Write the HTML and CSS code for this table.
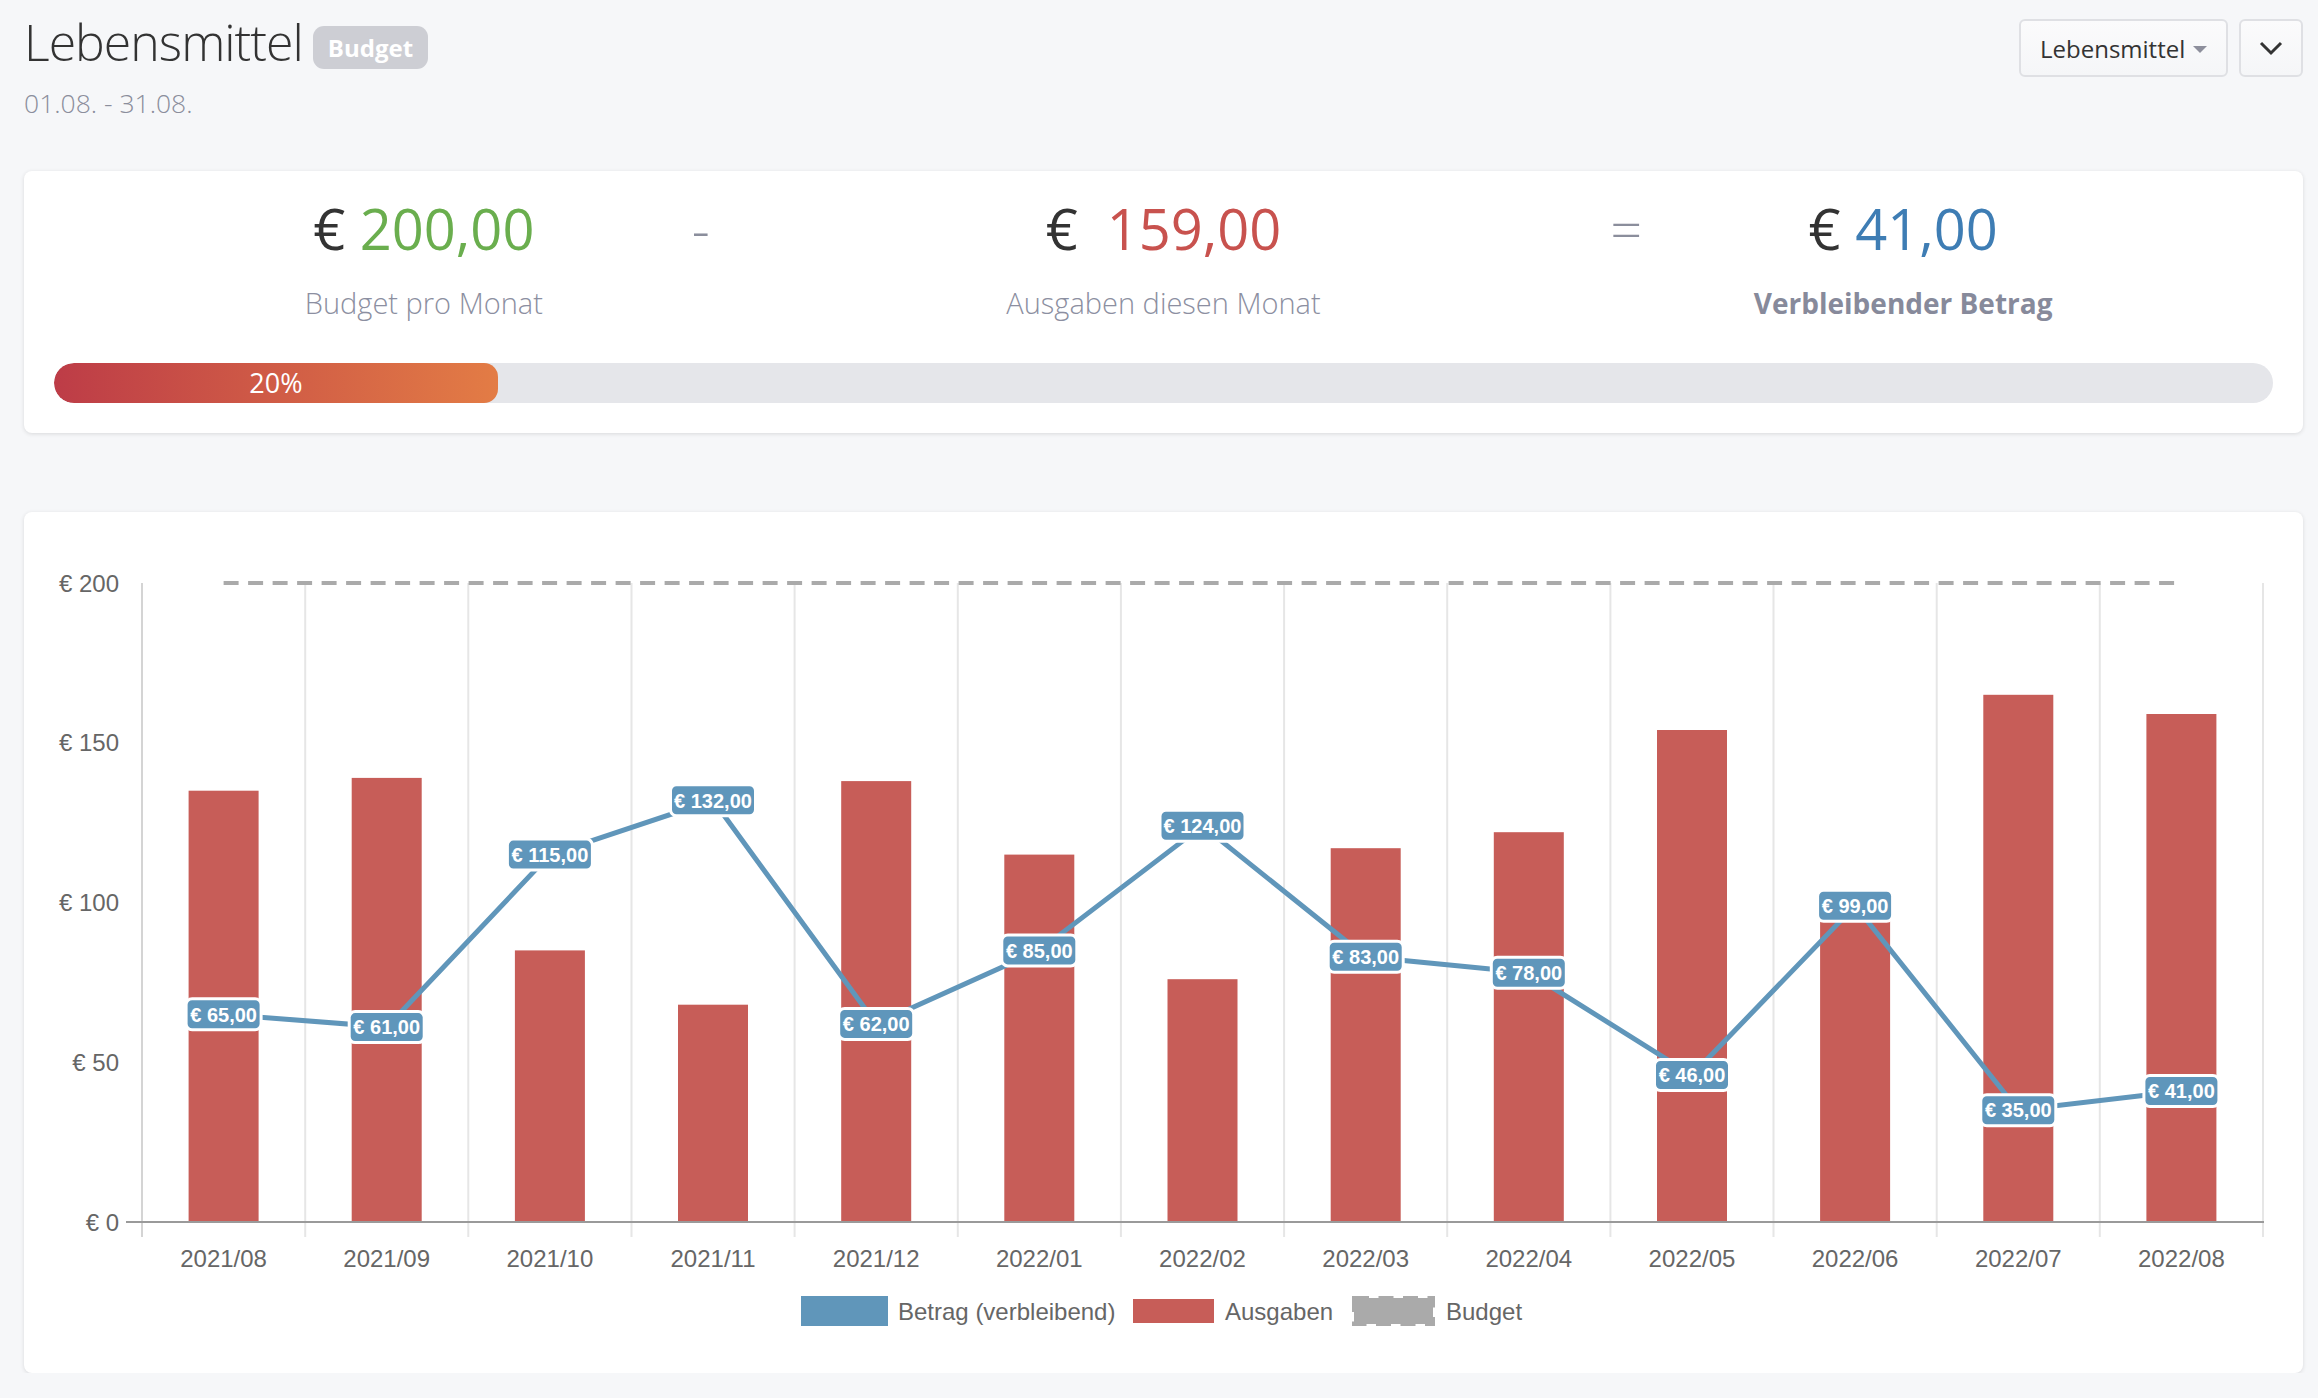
FILE: index.html
```html
<!DOCTYPE html>
<html lang="de">
<head>
<meta charset="utf-8">
<title>Lebensmittel – Budget</title>
<link rel="stylesheet" href="styles.css">
</head>
<body>
<div class="page">
  <header class="head">
    <div class="head-left">
      <h1 class="title">Lebensmittel<span class="badge">Budget</span></h1>
      <div class="date">01.08. - 31.08.</div>
    </div>
    <div class="actions">
      <button class="btn dropdown">Lebensmittel<span class="caret"></span></button>
      <button class="btn icon-btn" aria-label="Mehr">
        <svg class="chev" width="24" height="16" viewBox="0 0 24 16"><polyline points="2,3 12,13 22,3"/></svg>
      </button>
    </div>
  </header>

  <section class="card summary">
    <div class="stats">
      <div class="stat c1">
        <div class="value">€ <span class="green">200,00</span></div>
        <div class="label">Budget pro Monat</div>
      </div>
      <div class="op op-minus">-</div>
      <div class="stat c2">
        <div class="value">€&nbsp; <span class="red">159,00</span></div>
        <div class="label">Ausgaben diesen Monat</div>
      </div>
      <div class="op op-eq">=</div>
      <div class="stat c3">
        <div class="value">€ <span class="blue">41,00</span></div>
        <div class="label strong">Verbleibender Betrag</div>
      </div>
    </div>
    <div class="progress"><div class="fill" style="width:20%">20%</div></div>
  </section>

  <section class="card chart">
    <svg class="chart-svg" width="2279" height="861" viewBox="24 512 2279 861">
      <g class="grid">
        <line class="yaxis" x1="142" y1="583" x2="142" y2="1237"/>
        <line x1="305.2" y1="583" x2="305.2" y2="1237"/>
        <line x1="468.3" y1="583" x2="468.3" y2="1237"/>
        <line x1="631.5" y1="583" x2="631.5" y2="1237"/>
        <line x1="794.6" y1="583" x2="794.6" y2="1237"/>
        <line x1="957.8" y1="583" x2="957.8" y2="1237"/>
        <line x1="1120.9" y1="583" x2="1120.9" y2="1237"/>
        <line x1="1284.1" y1="583" x2="1284.1" y2="1237"/>
        <line x1="1447.2" y1="583" x2="1447.2" y2="1237"/>
        <line x1="1610.4" y1="583" x2="1610.4" y2="1237"/>
        <line x1="1773.5" y1="583" x2="1773.5" y2="1237"/>
        <line x1="1936.7" y1="583" x2="1936.7" y2="1237"/>
        <line x1="2099.8" y1="583" x2="2099.8" y2="1237"/>
        <line x1="2263" y1="583" x2="2263" y2="1237"/>
      </g>
      <g class="bars">
        <rect x="188.6" y="790.7" width="70" height="431.3"/>
        <rect x="351.7" y="777.9" width="70" height="444.1"/>
        <rect x="514.9" y="950.4" width="70" height="271.6"/>
        <rect x="678.0" y="1004.7" width="70" height="217.3"/>
        <rect x="841.2" y="781.1" width="70" height="440.9"/>
        <rect x="1004.3" y="854.6" width="70" height="367.4"/>
        <rect x="1167.5" y="979.2" width="70" height="242.8"/>
        <rect x="1330.7" y="848.2" width="70" height="373.8"/>
        <rect x="1493.8" y="832.2" width="70" height="389.8"/>
        <rect x="1657.0" y="730.0" width="70" height="492.0"/>
        <rect x="1820.1" y="899.3" width="70" height="322.7"/>
        <rect x="1983.3" y="694.8" width="70" height="527.2"/>
        <rect x="2146.4" y="714.0" width="70" height="508.0"/>
      </g>
      <line class="xaxis" x1="126" y1="1222" x2="2264" y2="1222"/>
      <line class="budget" x1="223.6" y1="583" x2="2181.4" y2="583"/>
      <polyline class="remain" points="223.6,1014.3 386.7,1027.1 549.9,854.6 713.0,800.3 876.2,1023.9 1039.3,950.4 1202.5,825.8 1365.7,956.8 1528.8,972.8 1692.0,1075.0 1855.1,905.7 2018.3,1110.2 2181.4,1091.0"/>
      <g class="dlabels">
        <rect x="186.1" y="998.8" width="75" height="31" rx="6"/><text x="223.6" y="1021.5">€ 65,00</text>
        <rect x="349.2" y="1011.6" width="75" height="31" rx="6"/><text x="386.7" y="1034.3">€ 61,00</text>
        <rect x="507.4" y="839.1" width="85" height="31" rx="6"/><text x="549.9" y="861.8">€ 115,00</text>
        <rect x="670.5" y="784.8" width="85" height="31" rx="6"/><text x="713.0" y="807.5">€ 132,00</text>
        <rect x="838.7" y="1008.4" width="75" height="31" rx="6"/><text x="876.2" y="1031.1">€ 62,00</text>
        <rect x="1001.8" y="934.9" width="75" height="31" rx="6"/><text x="1039.3" y="957.6">€ 85,00</text>
        <rect x="1160.0" y="810.3" width="85" height="31" rx="6"/><text x="1202.5" y="833.0">€ 124,00</text>
        <rect x="1328.2" y="941.3" width="75" height="31" rx="6"/><text x="1365.7" y="964.0">€ 83,00</text>
        <rect x="1491.3" y="957.3" width="75" height="31" rx="6"/><text x="1528.8" y="980.0">€ 78,00</text>
        <rect x="1654.5" y="1059.5" width="75" height="31" rx="6"/><text x="1692.0" y="1082.2">€ 46,00</text>
        <rect x="1817.6" y="890.2" width="75" height="31" rx="6"/><text x="1855.1" y="912.9">€ 99,00</text>
        <rect x="1980.8" y="1094.7" width="75" height="31" rx="6"/><text x="2018.3" y="1117.4">€ 35,00</text>
        <rect x="2143.9" y="1075.5" width="75" height="31" rx="6"/><text x="2181.4" y="1098.2">€ 41,00</text>
      </g>
      <g class="ticks ylab">
        <text x="119" y="591.6">€ 200</text>
        <text x="119" y="751.4">€ 150</text>
        <text x="119" y="911.1">€ 100</text>
        <text x="119" y="1070.9">€ 50</text>
        <text x="119" y="1230.6">€ 0</text>
      </g>
      <g class="ticks xlab">
        <text x="223.6" y="1267">2021/08</text>
        <text x="386.7" y="1267">2021/09</text>
        <text x="549.9" y="1267">2021/10</text>
        <text x="713.0" y="1267">2021/11</text>
        <text x="876.2" y="1267">2021/12</text>
        <text x="1039.3" y="1267">2022/01</text>
        <text x="1202.5" y="1267">2022/02</text>
        <text x="1365.7" y="1267">2022/03</text>
        <text x="1528.8" y="1267">2022/04</text>
        <text x="1692.0" y="1267">2022/05</text>
        <text x="1855.1" y="1267">2022/06</text>
        <text x="2018.3" y="1267">2022/07</text>
        <text x="2181.4" y="1267">2022/08</text>
      </g>
      <g class="legend">
        <rect class="lg-blue" x="801" y="1296" width="87" height="30"/>
        <text x="898" y="1319.6">Betrag (verbleibend)</text>
        <rect class="lg-red" x="1133" y="1299" width="81" height="24"/>
        <text x="1225" y="1319.6">Ausgaben</text>
        <rect class="lg-gray" x="1354" y="1298" width="79" height="26"/>
        <text x="1446" y="1319.6">Budget</text>
      </g>
    </svg>
  </section>
</div>
</body>
</html>
```

FILE: styles.css
```css
* { box-sizing: border-box; }
html, body { margin: 0; }
body {
  background: #f6f7f9;
  font-family: "Open Sans", "Liberation Sans", sans-serif;
  color: #333;
}
.page { padding: 11px 15px 0 24px; }

/* header */
.head {
  display: flex;
  justify-content: space-between;
  align-items: flex-start;
}
.title {
  margin: 0;
  display: flex;
  align-items: flex-start;
  font-size: 50px;
  font-weight: 300;
  letter-spacing: -1px;
  line-height: 62px;
  color: #333;
}
.badge {
  margin: 15px 0 0 10px;
  height: 43px;
  padding: 0 15px;
  border-radius: 11px;
  background: #cdced4;
  color: #fff;
  font-size: 24px;
  font-weight: 700;
  letter-spacing: 0;
  line-height: 43px;
}
.date {
  margin-top: 12px;
  font-size: 26.5px;
  font-weight: 300;
  line-height: 36px;
  color: #8b8e9c;
}
.actions {
  display: flex;
  gap: 11px;
  margin-top: 8px;
}
.btn {
  height: 58px;
  border: 2px solid #dfe0e4;
  border-radius: 6px;
  background: linear-gradient(#fbfbfc, #f5f6f8);
  font-family: inherit;
  color: #333;
  display: flex;
  align-items: center;
  padding: 0;
}
.dropdown {
  width: 209px;
  padding: 0 0 0 19px;
  font-size: 24px;
  gap: 8px;
}
.caret {
  width: 0;
  height: 0;
  border-left: 7.5px solid transparent;
  border-right: 7.5px solid transparent;
  border-top: 7px solid #8d8f9c;
  margin-top: 3px;
}
.icon-btn {
  width: 64px;
  justify-content: center;
}
.chev polyline {
  fill: none;
  stroke: #333;
  stroke-width: 3;
}

/* cards */
.card {
  background: #fff;
  border-radius: 8px;
  box-shadow: 0 1px 4px rgba(0, 0, 0, 0.12);
}
.summary {
  margin-top: 50px;
  padding: 24px 30px 30px;
}
.stats {
  display: grid;
  grid-template-columns: repeat(3, 1fr);
}
.stat {
  grid-row: 1;
  text-align: center;
}
.c1 { grid-column: 1; }
.c2 { grid-column: 2; }
.c3 { grid-column: 3; }
.value {
  font-size: 56px;
  font-weight: 400;
  line-height: 66px;
  color: #333;
}
.green { color: #6aae4e; }
.red { color: #c8524e; }
.blue { color: #3e7db4; }
.label {
  margin-top: 22px;
  font-size: 29px;
  font-weight: 300;
  line-height: 40px;
  color: #8c8fa1;
}
.label.strong {
  font-size: 28px;
  font-weight: 700;
  color: #878a9b;
}
.op {
  grid-row: 1;
  align-self: start;
  font-size: 56px;
  font-weight: 300;
  line-height: 66px;
  color: #8b8e9c;
}
.op-minus {
  grid-column: 1;
  justify-self: end;
  margin-right: 84px;
}
.op-eq {
  grid-column: 3;
  justify-self: start;
  margin-left: 77px;
}
.progress {
  margin-top: 40px;
  height: 40px;
  border-radius: 20px;
  background: #e5e6ea;
  overflow: hidden;
}
.fill {
  height: 100%;
  border-radius: 20px 14px 14px 20px;
  background: linear-gradient(90deg, #bd3c47, #e37c45);
  color: #fff;
  font-size: 27px;
  font-weight: 400;
  line-height: 40px;
  text-align: center;
}

/* chart */
.chart {
  margin-top: 79px;
  height: 861px;
  overflow: hidden;
}
.chart-svg { display: block; }
.grid line { stroke: #e6e6e6; stroke-width: 2; }
.grid line.yaxis { stroke: #d4d4d4; }
.xaxis { stroke: #9a9a9a; stroke-width: 2; }
.bars rect { fill: #c75d58; }
.budget {
  stroke: #aaaaaa;
  stroke-width: 4;
  stroke-dasharray: 15 9.5;
}
.remain {
  fill: none;
  stroke: #6096ba;
  stroke-width: 5;
}
.dlabels rect {
  fill: #5f96bb;
  stroke: #fff;
  stroke-width: 3;
}
.dlabels text {
  fill: #fff;
  font-family: "Liberation Sans", Arial, sans-serif;
  font-size: 20px;
  font-weight: 700;
  text-anchor: middle;
}
.ticks text, .legend text {
  fill: #666;
  font-family: "Liberation Sans", Arial, sans-serif;
  font-size: 24px;
}
.ylab text { text-anchor: end; }
.xlab text { text-anchor: middle; }
.lg-blue { fill: #6096ba; }
.lg-red { fill: #c75d58; }
.lg-gray {
  fill: #aaaaaa;
  stroke: #aaaaaa;
  stroke-width: 4;
  stroke-dasharray: 15 9.5;
}
```
